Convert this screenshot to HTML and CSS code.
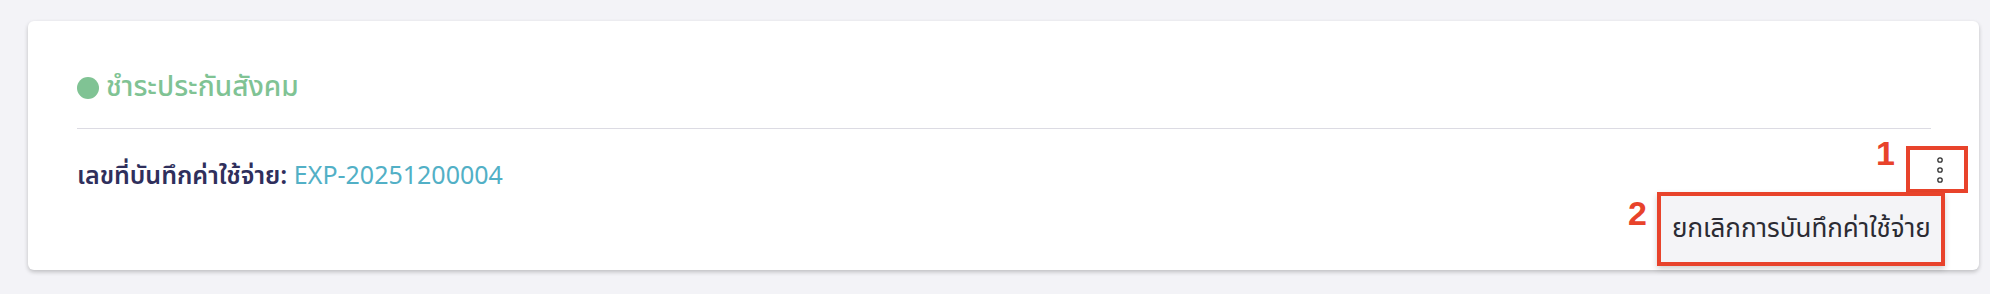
FILE: index.html
```html
<!DOCTYPE html>
<html lang="th">
<head>
<meta charset="utf-8">
<title>ชำระประกันสังคม</title>
<link rel="stylesheet" href="styles.css">
</head>
<body>
<div class="page">
  <section class="card">
    <h2 class="title"><span class="dot"></span>ชำระประกันสังคม</h2>
    <hr class="divider">
    <div class="row">
      <div class="info"><span class="label">เลขที่บันทึกค่าใช้จ่าย:</span> <span class="code">EXP-20251200004</span></div>
      <div class="actions">
        <button class="kebab" type="button" aria-label="more">
          <svg width="8" height="26" viewBox="0 0 8 26"><circle cx="4" cy="3" r="2.2" fill="none" stroke="#333" stroke-width="1.3"/><circle cx="4" cy="13" r="2.2" fill="none" stroke="#333" stroke-width="1.3"/><circle cx="4" cy="23" r="2.2" fill="none" stroke="#333" stroke-width="1.3"/></svg>
        </button>
        <span class="mark mark-1">1</span>
        <div class="menu">
          <div class="menu-item">ยกเลิกการบันทึกค่าใช้จ่าย</div>
        </div>
        <span class="mark mark-2">2</span>
      </div>
    </div>
  </section>
</div>
</body>
</html>
```

FILE: styles.css
```css
html, body {
  margin: 0;
  padding: 0;
  background: #f3f3f7;
  font-family: "Noto Sans Thai", "Noto Sans", "Liberation Sans", sans-serif;
}

.page {
  padding: 21px 11px 24px 28px;
}

.card {
  background: #ffffff;
  border-radius: 6px;
  box-shadow: 0 2px 4px rgba(0, 0, 0, 0.22);
  height: 249px;
  box-sizing: border-box;
  padding: 48px 48px 0 49px;
}

.title {
  margin: 0;
  display: flex;
  align-items: center;
  gap: 7px;
  color: #80c394;
  font-size: 28px;
  font-weight: 500;
  line-height: 38px;
  height: 38px;
}

.dot {
  width: 22px;
  height: 22px;
  border-radius: 50%;
  background: #80c394;
  flex: none;
}

.divider {
  margin: 21px 0 0 0;
  border: 0;
  border-top: 1px solid #dcdbe3;
  height: 0;
}

.row {
  display: flex;
  justify-content: space-between;
  align-items: flex-start;
  margin-right: -37px;
  margin-top: 17px;
}

.info {
  font-size: 25px;
  line-height: 34px;
  padding-top: 13px;
}

.label {
  color: #2f2f5c;
  font-weight: 600;
}

.code {
  color: #52b0c6;
}

.actions {
  position: relative;
  width: 62px;
  height: 47px;
}

.kebab {
  width: 62px;
  height: 47px;
  box-sizing: border-box;
  border: 4.5px solid #e8432b;
  background: #ffffff;
  display: flex;
  align-items: center;
  justify-content: center;
  padding: 0 0 0 6px;
  cursor: pointer;
}

.mark {
  position: absolute;
  color: #e8432b;
  font-family: "Liberation Sans", sans-serif;
  font-weight: 700;
  font-size: 34px;
  line-height: 1;
}

.mark-1 {
  left: -30px;
  top: -10px;
}

.mark-2 {
  left: -278px;
  top: 50px;
}

.menu {
  position: absolute;
  top: 46px;
  right: 23px;
  width: 288px;
  height: 74px;
  box-sizing: border-box;
  border: 4.5px solid #e8432b;
  background: #f4f4f7;
  box-shadow: 0 3px 6px rgba(0, 0, 0, 0.18);
  display: flex;
  align-items: center;
}

.menu-item {
  padding-left: 11px;
  font-size: 26px;
  color: #2b2b33;
  white-space: nowrap;
}
```
